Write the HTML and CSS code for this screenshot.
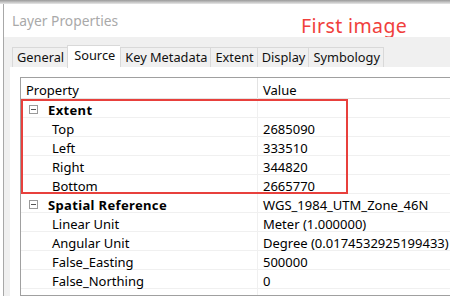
FILE: index.html
```html
<!DOCTYPE html>
<html>
<head>
<meta charset="utf-8">
<link rel="stylesheet" href="styles.css">
</head>
<body>
<div class="strip"></div>
<div class="window">
  <div class="titlebar">
    <span class="title">Layer Properties</span>
    <span class="caption">First image</span>
  </div>
  <div class="body">
    <div class="tabs">
      <div class="tab">General</div>
      <div class="tab active">Source</div>
      <div class="tab">Key Metadata</div>
      <div class="tab">Extent</div>
      <div class="tab">Display</div>
      <div class="tab">Symbology</div>
    </div>
    <div class="panel">
      <div class="grid">
        <div class="row head"><div class="c1">Property</div><div class="c2">Value</div></div>
        <div class="group">
          <div class="row"><div class="c1 cat"><span class="tog"></span>Extent</div><div class="c2"></div></div>
          <div class="row"><div class="c1 sub">Top</div><div class="c2">2685090</div></div>
          <div class="row"><div class="c1 sub">Left</div><div class="c2">333510</div></div>
          <div class="row"><div class="c1 sub">Right</div><div class="c2">344820</div></div>
          <div class="row"><div class="c1 sub">Bottom</div><div class="c2">2665770</div></div>
          <div class="highlight"></div>
        </div>
        <div class="row"><div class="c1 cat"><span class="tog"></span>Spatial Reference</div><div class="c2">WGS_1984_UTM_Zone_46N</div></div>
        <div class="row"><div class="c1 sub">Linear Unit</div><div class="c2">Meter (1.000000)</div></div>
        <div class="row"><div class="c1 sub">Angular Unit</div><div class="c2">Degree (0.0174532925199433)</div></div>
        <div class="row"><div class="c1 sub">False_Easting</div><div class="c2">500000</div></div>
        <div class="row"><div class="c1 sub">False_Northing</div><div class="c2">0</div></div>
        <div class="row cut"><div class="c1 sub">Central_Meridian</div><div class="c2">93</div></div>
      </div>
    </div>
  </div>
</div>
</body>
</html>
```
FILE: styles.css
```css
* { box-sizing: border-box; }
html, body { margin: 0; padding: 0; }
body {
  width: 450px;
  height: 296px;
  overflow: hidden;
  background: #ffffff;
  font-family: "Noto Sans", "Open Sans", sans-serif;
  color: #000;
}
.strip {
  height: 4px;
  background: linear-gradient(#9a9a9a, #e8e8e8);
}
.window {
  margin-left: 3px;
  border-left: 1px solid #a8a8a8;
  height: 292px;
  display: flex;
  flex-direction: column;
}
.titlebar {
  height: 33px;
  flex: none;
  background: #fff;
  display: flex;
  align-items: center;
  padding-left: 8px;
}
.title {
  color: #a9a9a9;
  font-size: 13.8px;
  width: 289px;
}
.caption {
  color: #f0403c;
  font-size: 19.5px;
  letter-spacing: 0.4px;
  margin-top: 9px;
}
.body {
  flex: 1;
  background: #f0f0f0;
  padding: 8px 0 0 6px;
  display: flex;
  flex-direction: column;
  min-height: 0;
}
.tabs {
  display: flex;
  flex: none;
  align-items: flex-end;
  height: 22px;
  padding-left: 2px;
}
.tab {
  height: 20px;
  border: 1px solid #d9d9d9;
  border-bottom: none;
  border-right: none;
  background: #f0f0f0;
  font-size: 12.8px;
  line-height: 19px;
  padding: 0 3px 0 4px;
  color: #111;
}
.tab:last-child { border-right: 1px solid #d9d9d9; }
.tab.active {
  height: 23px;
  background: #fff;
  line-height: 18px;
  margin-bottom: -1px;
  padding: 0 5px 0 6px;
  position: relative;
  z-index: 1;
}
.panel {
  flex: 1;
  background: #fff;
  padding: 10px 0 0 10px;
  min-height: 0;
  overflow: hidden;
}
.grid {
  border: 1px solid #a0a0a0;
  border-right: none;
  width: 440px;
  height: 219px;
  overflow: hidden;
}
.row {
  display: flex;
  height: 19px;
  font-size: 13px;
  line-height: 18px;
  padding-top: 2px;
  border-bottom: 1px solid #f0f0f0;
}
.row.head {
  height: 21px;
  padding-top: 3px;
  border-bottom: 1px solid #e3e3e3;
}
.c1 {
  width: 237px;
  margin-top: -3px;
  padding-top: 3px;
  margin-bottom: -1px;
  border-right: 1px solid #f0f0f0;
  padding-left: 5px;
  white-space: nowrap;
  display: flex;
  align-items: center;
}
.head .c1 { border-right-color: #e3e3e3; }
.c2 {
  padding-left: 5px;
  white-space: nowrap;
}
.cat {
  font-weight: bold;
  padding-left: 8px;
  letter-spacing: 0.35px;
}
.tog {
  width: 9px;
  height: 9px;
  border: 1px solid #9a9a9a;
  position: relative;
  margin-right: 10px;
  flex: none;
}
.tog::after {
  content: "";
  position: absolute;
  left: 1px;
  right: 1px;
  top: 3px;
  height: 1px;
  background: #555;
}
.sub { padding-left: 31px; }
.group { position: relative; }
.highlight {
  position: absolute;
  left: 0;
  top: 0;
  width: 327px;
  height: 95px;
  border: 2px solid #e8403c;
  pointer-events: none;
}
```
